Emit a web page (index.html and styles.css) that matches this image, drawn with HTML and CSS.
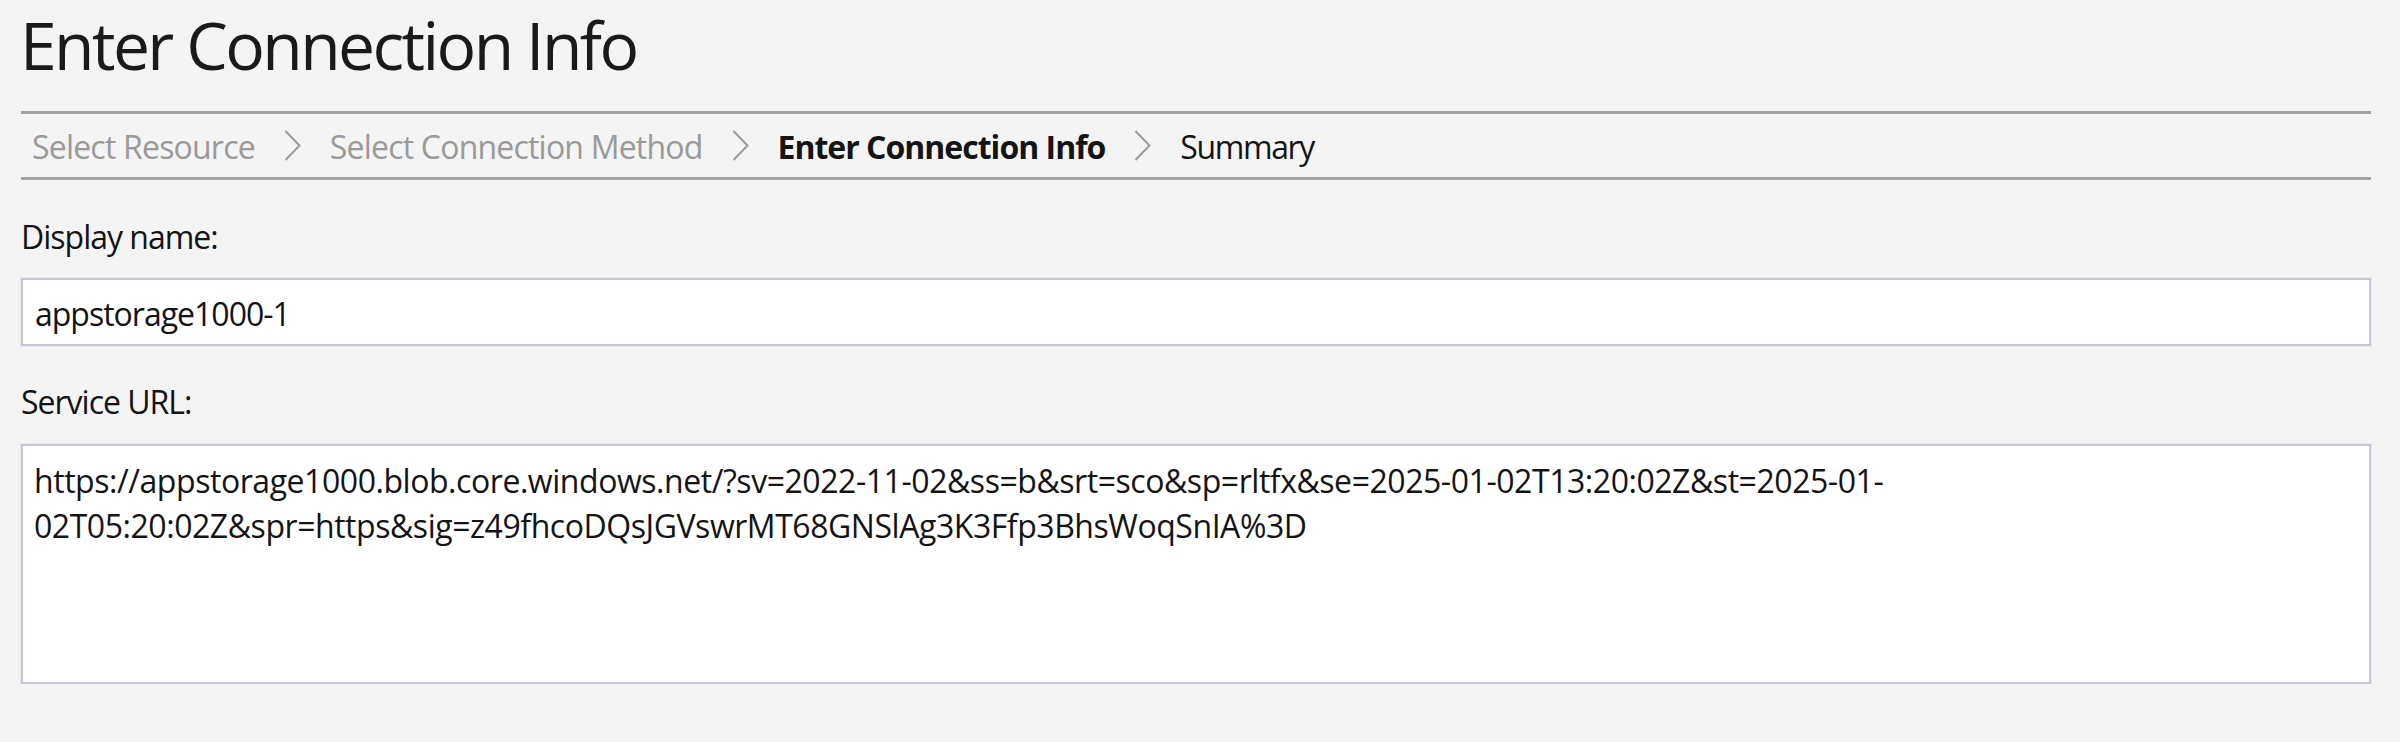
FILE: index.html
```html
<!DOCTYPE html>
<html lang="en">
<head>
<meta charset="utf-8">
<title>Enter Connection Info</title>
<link rel="stylesheet" href="styles.css">
</head>
<body>
<main class="page">
  <h1 class="title">Enter Connection Info</h1>
  <nav class="crumbs">
    <span class="crumb crumb-done">Select Resource</span>
    <svg class="chev" viewBox="0 0 17 31" aria-hidden="true"><polyline points="1.5,1 15.5,15.5 1.5,30"/></svg>
    <span class="crumb crumb-done">Select Connection Method</span>
    <svg class="chev" viewBox="0 0 17 31" aria-hidden="true"><polyline points="1.5,1 15.5,15.5 1.5,30"/></svg>
    <span class="crumb crumb-active">Enter Connection Info</span>
    <svg class="chev" viewBox="0 0 17 31" aria-hidden="true"><polyline points="1.5,1 15.5,15.5 1.5,30"/></svg>
    <span class="crumb crumb-next">Summary</span>
  </nav>
  <form class="form">
    <label class="label label-first" for="name">Display name:</label>
    <input class="field" id="name" type="text" value="appstorage1000-1">
    <label class="label" for="url">Service URL:</label>
    <textarea class="field area" id="url">https://appstorage1000.blob.core.windows.net/?sv=2022-11-02&amp;ss=b&amp;srt=sco&amp;sp=rltfx&amp;se=2025-01-02T13:20:02Z&amp;st=2025-01-02T05:20:02Z&amp;spr=https&amp;sig=z49fhcoDQsJGVswrMT68GNSlAg3K3Ffp3BhsWoqSnIA%3D</textarea>
  </form>
</main>
</body>
</html>
```

FILE: styles.css
```css
html, body {
  margin: 0;
  padding: 0;
  background: #f4f4f4;
}

body {
  font-family: "Open Sans", "Noto Sans", sans-serif;
  color: #141414;
}

.page {
  padding: 0 29px 0 21px;
  display: flex;
  flex-direction: column;
}

.title {
  margin: 4px 0 0 -1px;
  font-size: 66px;
  line-height: 80px;
  font-weight: 400;
  letter-spacing: -2.6px;
  color: #1a1a1a;
}

.crumbs {
  margin-top: 27px;
  border-top: 3px solid #a3a3a3;
  border-bottom: 3px solid #a3a3a3;
  padding: 2px 0 0 11px;
  height: 61px;
  display: flex;
  align-items: center;
  gap: 29px;
}

.crumb {
  font-size: 32px;
  line-height: 61px;
  letter-spacing: -0.8px;
  white-space: nowrap;
  color: #141414;
}

.crumb-done {
  color: #9a9a9a;
}

.crumb-active {
  font-weight: 700;
  letter-spacing: -1px;
  color: #141414;
}

.crumb-next {
  letter-spacing: -1.4px;
}

.chev {
  width: 17px;
  height: 31px;
  flex: none;
  margin-top: -2px;
}

.chev polyline {
  fill: none;
  stroke: #9a9a9a;
  stroke-width: 2;
}

.form {
  display: flex;
  flex-direction: column;
}

.label {
  font-size: 32px;
  line-height: 44px;
  letter-spacing: -1px;
  margin: 34px 0 20px 0;
  color: #141414;
}

.label-first {
  margin-top: 35px;
  margin-bottom: 19px;
}

.field {
  box-sizing: border-box;
  margin: 0;
  width: 100%;
  font-family: "Open Sans", "Noto Sans", sans-serif;
  font-size: 32px;
  line-height: 44px;
  letter-spacing: -1px;
  color: #141414;
  background: #ffffff;
  border: 2px solid #c6c8d8;
  box-shadow: 0 0 0 1px #e8e9ef;
  border-radius: 0;
  outline: none;
  padding: 11px 12px 9px 12px;
  height: 68px;
}

.area {
  height: 240px;
  line-height: 45px;
  letter-spacing: -0.45px;
  padding: 12px 12px 10px 11px;
  resize: none;
  overflow: hidden;
  display: block;
}
```
